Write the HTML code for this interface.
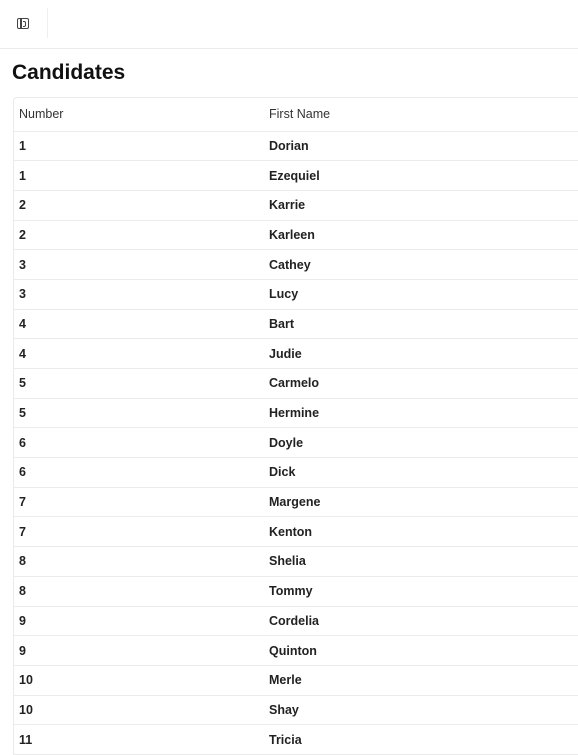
<!DOCTYPE html>
<html><head><style>
*{margin:0;padding:0;box-sizing:border-box}
body{width:578px;height:752px;overflow:hidden;background:#fff;font-family:"Liberation Sans",sans-serif;color:#1a1a1a}
.top{height:49px;border-bottom:1px solid #ececec;position:relative}
.ic{position:absolute;left:17px;top:18px;width:12px;height:11px;border:1.5px solid #444;border-radius:2px}
.ic:before{content:"";position:absolute;left:2px;top:0;bottom:0;width:1.5px;background:#444}
.ic:after{content:"";position:absolute;left:5px;top:2px;width:2px;height:4px;border:1px solid #444;border-left:none;border-radius:0 2px 2px 0}
.div{position:absolute;left:47px;top:8px;width:1px;height:30px;background:#eee}
h1{position:absolute;left:12px;top:61px;font-size:21px;font-weight:bold;color:#111}
.tbl{position:absolute;left:13px;top:97px;width:580px;border:1px solid #eaeaea;border-right:none;border-radius:4px 0 0 0}
.r{display:flex;height:29.7px;align-items:center;border-top:1px solid #ececec;font-size:12.5px;font-weight:bold;color:#222}
.h{height:32.5px;border-top:none;font-weight:normal;color:#333}
.r span:first-child{width:255px;padding-left:5px}
</style></head><body>
<div class="top"><div class="ic"></div><div class="div"></div></div>
<h1>Candidates</h1>
<div class="tbl">
<div class="r h"><span>Number</span><span>First Name</span></div>
<div class="r"><span>1</span><span>Dorian</span></div>
<div class="r"><span>1</span><span>Ezequiel</span></div>
<div class="r"><span>2</span><span>Karrie</span></div>
<div class="r"><span>2</span><span>Karleen</span></div>
<div class="r"><span>3</span><span>Cathey</span></div>
<div class="r"><span>3</span><span>Lucy</span></div>
<div class="r"><span>4</span><span>Bart</span></div>
<div class="r"><span>4</span><span>Judie</span></div>
<div class="r"><span>5</span><span>Carmelo</span></div>
<div class="r"><span>5</span><span>Hermine</span></div>
<div class="r"><span>6</span><span>Doyle</span></div>
<div class="r"><span>6</span><span>Dick</span></div>
<div class="r"><span>7</span><span>Margene</span></div>
<div class="r"><span>7</span><span>Kenton</span></div>
<div class="r"><span>8</span><span>Shelia</span></div>
<div class="r"><span>8</span><span>Tommy</span></div>
<div class="r"><span>9</span><span>Cordelia</span></div>
<div class="r"><span>9</span><span>Quinton</span></div>
<div class="r"><span>10</span><span>Merle</span></div>
<div class="r"><span>10</span><span>Shay</span></div>
<div class="r"><span>11</span><span>Tricia</span></div>
</div>
</body></html>
